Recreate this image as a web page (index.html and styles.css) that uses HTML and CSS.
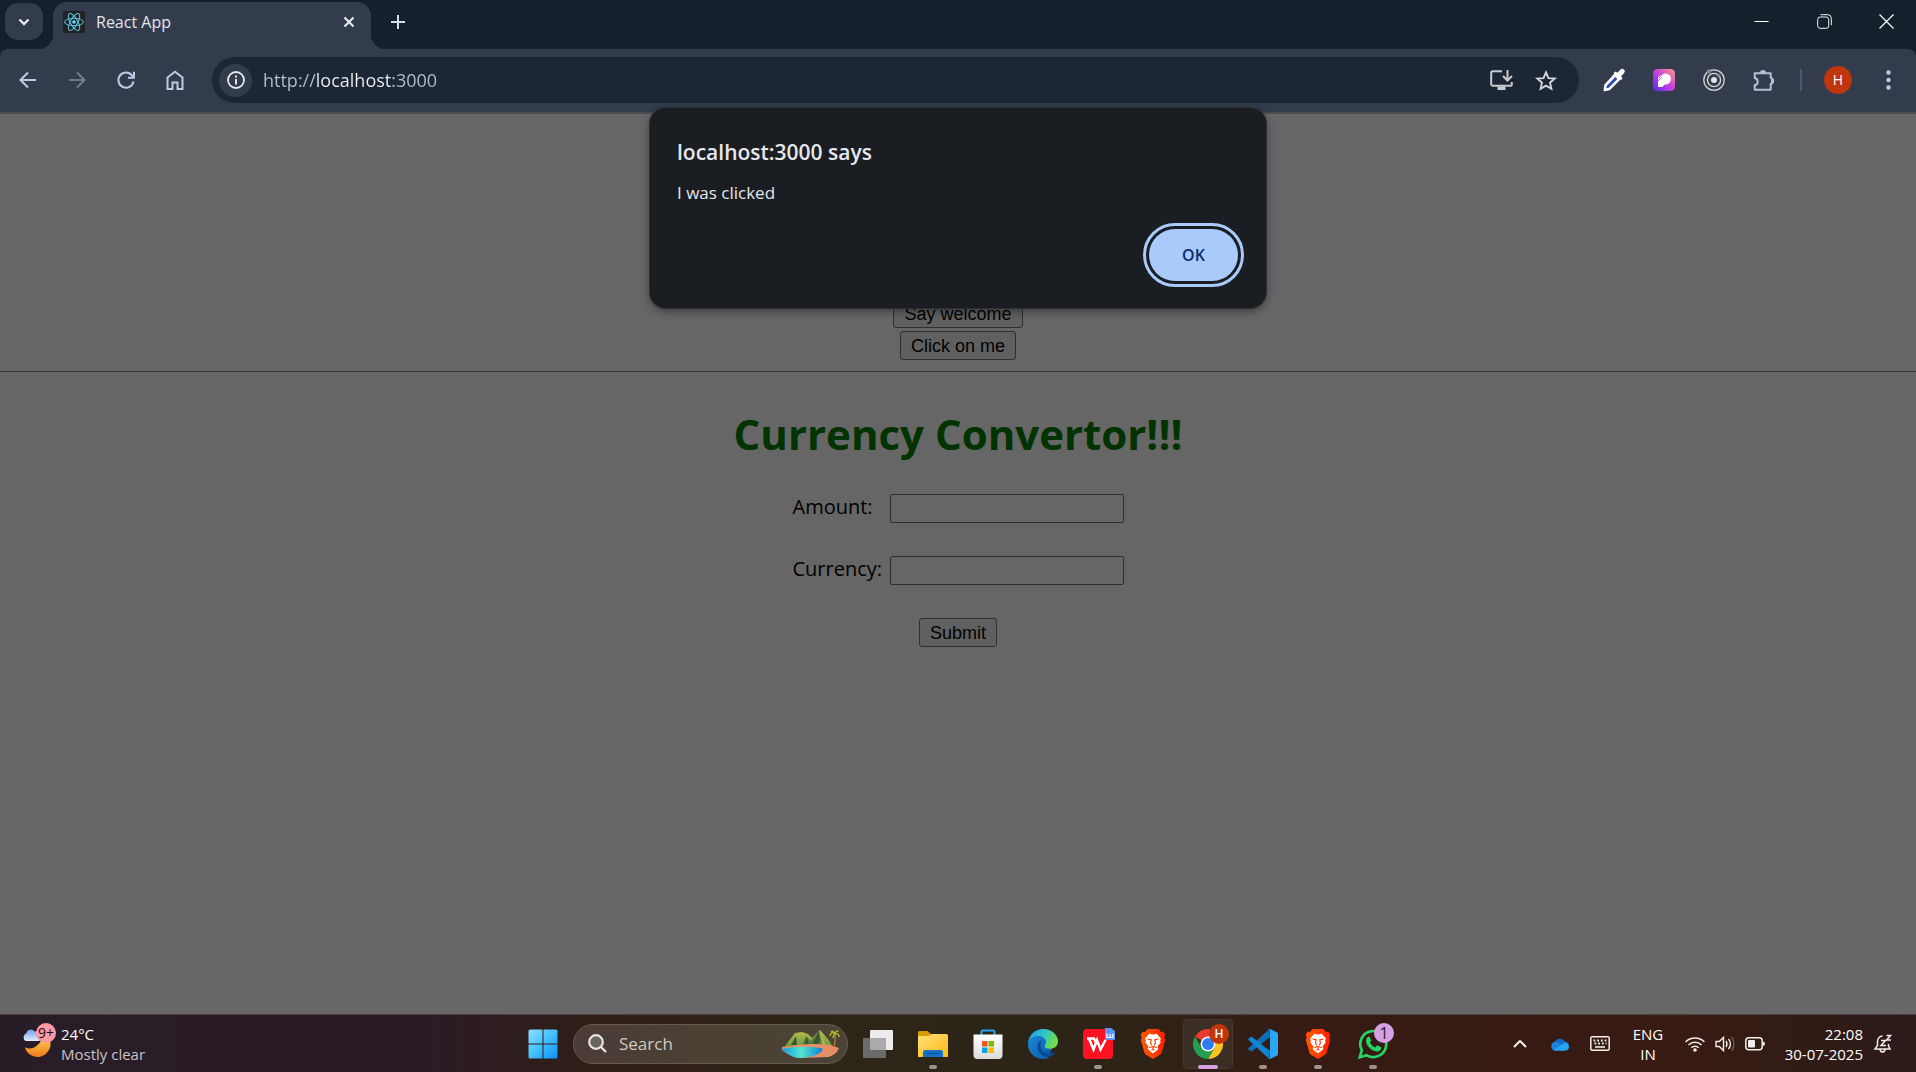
FILE: index.html
```html
<!DOCTYPE html>
<html lang="en">
<head>
<meta charset="utf-8">
<title>React App</title>
<link rel="stylesheet" href="styles.css">
</head>
<body>
<svg class="defs" aria-hidden="true">
  <defs>
    <linearGradient id="gBrave" x1="0" x2="1"><stop offset="0" stop-color="#ff5601"/><stop offset=".5" stop-color="#ff4000"/><stop offset="1" stop-color="#ff1f01"/></linearGradient>
    <linearGradient id="gMoon" x1="0" y1="0" x2="0" y2="1"><stop offset="0" stop-color="#ffc64a"/><stop offset="1" stop-color="#ec7a1c"/></linearGradient>
    <linearGradient id="gCloud" x1="0" y1="0" x2="0" y2="1"><stop offset="0" stop-color="#6f9df0"/><stop offset="1" stop-color="#e3eeff"/></linearGradient>
    <linearGradient id="gWin" x1="0" y1="0" x2="1" y2="1"><stop offset="0" stop-color="#8de0ff"/><stop offset=".5" stop-color="#42c0ff"/><stop offset="1" stop-color="#0e90f8"/></linearGradient>
    <linearGradient id="gFolder" x1="0" y1="0" x2="1" y2="1"><stop offset="0" stop-color="#ffe07a"/><stop offset="1" stop-color="#fdb913"/></linearGradient>
    <linearGradient id="gEdgeTop" x1="0" y1="0" x2="1" y2=".4"><stop offset="0" stop-color="#1f9be8"/><stop offset=".55" stop-color="#2fc3c8"/><stop offset="1" stop-color="#6fe04a"/></linearGradient>
    <linearGradient id="gEdgeLow" x1="0" y1="0" x2="1" y2="1"><stop offset="0" stop-color="#1b8fdf"/><stop offset="1" stop-color="#0d56a8"/></linearGradient>
    <linearGradient id="gPics" x1="0" y1="1" x2="1" y2="0"><stop offset="0" stop-color="#5a22f5"/><stop offset=".55" stop-color="#d045d8"/><stop offset="1" stop-color="#ff9a8a"/></linearGradient>
    <linearGradient id="gLake" x1="0" x2="1"><stop offset="0" stop-color="#0f97e6"/><stop offset=".5" stop-color="#55e6cf"/><stop offset="1" stop-color="#0a80d8"/></linearGradient>
    <linearGradient id="gHill" x1="0" y1="0" x2="0" y2="1"><stop offset="0" stop-color="#b9c14c"/><stop offset="1" stop-color="#5f8f3a"/></linearGradient>
    <linearGradient id="gBag" x1="0" y1="0" x2="0" y2="1"><stop offset="0" stop-color="#ffffff"/><stop offset="1" stop-color="#dcdcdc"/></linearGradient>
    <symbol id="brave" viewBox="0 0 30 30">
      <path fill="url(#gBrave)" d="M9.500 0h11l2.500 3 2.300-.2 2 3-1 2.700.9 2.700-3.600 12.300a4 4 0 0 1-1.600 2.200L15 30l-7-4.300a4 4 0 0 1-1.600-2.200L2.800 11.200l.9-2.700-1-2.700 2-3L7 3z"/>
      <path fill="#fff" d="M15 5.500l3.700-.7 4.200 4.600-.8 2 .6 1.900-3.300 4.500 1 2.300-1.700 1.500L15 24.600l-3.700-3-1.700-1.500 1-2.300-3.300-4.500.6-1.900-.8-2 4.200-4.600z"/>
      <path fill="none" stroke="#fb4303" stroke-width="1.200" d="M9.500 10l3.700.8-.6 3.200 1 2.200M20.500 10l-3.700.8.6 3.200-1 2.200M11.300 18.800l3.700-1.500 3.700 1.500M15 17.300v2.900M13.500 21l1.500-.8 1.500.8"/>
    </symbol>
  </defs>
</svg>

<header class="browser">
  <div class="tabstrip">
    <button class="tab-search" aria-label="Search tabs"><svg width="12" height="8" viewBox="0 0 12 8"><path d="M1.500 1.500L6 6l4.500-4.500" fill="none" stroke="#e6e9ee" stroke-width="2.400"/></svg></button>
    <div class="tab">
      <svg width="22" height="22" viewBox="0 0 22 22"><rect width="22" height="22" rx="2" fill="#222"/><g fill="none" stroke="#5bc8e4" stroke-width="1"><ellipse cx="11" cy="11" rx="9.500" ry="3.700"/><ellipse cx="11" cy="11" rx="9.500" ry="3.700" transform="rotate(60 11 11)"/><ellipse cx="11" cy="11" rx="9.500" ry="3.700" transform="rotate(120 11 11)"/></g><circle cx="11" cy="11" r="1.800" fill="#61dafb"/></svg>
      <span class="tab-title">React App</span>
      <button class="plain" aria-label="Close tab"><svg width="12" height="12" viewBox="0 0 12 12"><path d="M1.500 1.500l9 9m0-9l-9 9" stroke="#eceef2" stroke-width="2"/></svg></button>
    </div>
    <button class="plain new-tab" aria-label="New tab"><svg width="14" height="14" viewBox="0 0 14 14"><path d="M7 0v14M0 7h14" stroke="#d5dcea" stroke-width="2"/></svg></button>
    <div class="window-controls">
      <button class="plain" aria-label="Minimize"><svg width="15" height="15" viewBox="0 0 15 15"><path d="M.5 7.500h14" stroke="#fff" stroke-width="1"/></svg></button>
      <button class="plain" aria-label="Restore"><svg width="15" height="15" viewBox="0 0 15 15" fill="none" stroke="#f0f0f0"><rect x=".7" y="3" width="11" height="11.300" rx="2.500"/><path d="M3.500.7h7.300a3.500 3.500 0 0 1 3.500 3.500v7"/></svg></button>
      <button class="plain" aria-label="Close"><svg width="15" height="15" viewBox="0 0 15 15"><path d="M.5.5l14 14m0-14l-14 14" stroke="#fff" stroke-width="1.200"/></svg></button>
    </div>
  </div>

  <div class="toolbar">
    <nav class="nav">
      <button class="plain" aria-label="Back"><svg width="18" height="18" viewBox="0 0 18 18" fill="none" stroke="#bccbe3" stroke-width="2"><path d="M17 9H2.500M9 1.500L1.500 9 9 16.500"/></svg></button>
      <button class="plain" aria-label="Forward"><svg width="18" height="18" viewBox="0 0 18 18" fill="none" stroke="#6f7a8b" stroke-width="2"><path d="M1 9h14.500M9 1.500L16.500 9 9 16.500"/></svg></button>
      <button class="plain" aria-label="Reload"><svg width="18" height="18" viewBox="0 0 18 18" fill="none" stroke="#bccbe3" stroke-width="2"><path d="M16.500 10.500A7.600 7.600 0 1 1 15 4.400L16 6M17 .8v6h-6"/></svg></button>
      <button class="plain" aria-label="Home"><svg width="18" height="20" viewBox="0 0 18 20" fill="none" stroke="#bccbe3" stroke-width="2"><path d="M1.500 7.500L9 1.700l7.500 5.800V19h-5v-6.500h-5V19h-5z"/></svg></button>
    </nav>
    <form class="omnibox">
      <button type="button" class="site-info" aria-label="Site information"><svg width="18" height="18" viewBox="0 0 18 18"><circle cx="9" cy="9" r="8" fill="none" stroke="#e4e6ea" stroke-width="1.800"/><path d="M9 8v5.500M9 4.500v2" stroke="#e4e6ea" stroke-width="2"/></svg></button>
      <input class="url" type="text" aria-label="Address" value="http://localhost:3000">
      <button type="button" class="plain" aria-label="Install app"><svg width="23" height="20" viewBox="0 0 23 20" fill="none" stroke="#c9cace" stroke-width="2"><path d="M12 1.200H3A1.800 1.800 0 0 0 1.200 3v11A1.800 1.800 0 0 0 3 15.800h17.200A1.500 1.500 0 0 0 21.800 14v-2M17.500 0v9.500M13 6l4.500 4.500L22 6"/><path d="M7.500 16.500h8V20h-8z" fill="#c9cace" stroke="none"/></svg></button>
      <button type="button" class="plain" aria-label="Bookmark"><svg width="22" height="20" viewBox="0 0 22 20"><path d="M11 2.300l2.500 5.800 6.200.5-4.700 4.100 1.400 6.100L11 15.600l-5.400 3.200L7 12.700 2.300 8.600l6.200-.5z" fill="none" stroke="#d3d5d9" stroke-width="1.900"/></svg></button>
    </form>
    <div class="extensions">
      <button class="plain" aria-label="Color picker"><svg width="22" height="22" viewBox="0 0 22 22"><path d="M12 5l5 5L6.500 20.500 1.300 21.500 2 16z" fill="#fff" stroke="#fff" stroke-width="1.500" stroke-linejoin="round"/><path d="M12.300 8l2 2-8.500 8.700-2.500.6.500-2.500z" fill="#3048b8"/><path d="M10.500 4l2-1.500 2 1.200L17.500.6a2.400 2.400 0 0 1 3.600 3.400l-3 3.300 1.400 2-1.600 2z" fill="#fff"/></svg></button>
      <button class="plain" aria-label="Photo editor"><svg width="22" height="22" viewBox="0 0 22 22"><rect width="22" height="22" rx="4.500" fill="url(#gPics)"/><path d="M5 18V8l6-3.500h1.500a5.500 5.500 0 0 1 0 11L11 16l-1.500 2z" fill="#fff"/><path d="M5 7l3-3M5 9.500L10.500 4M5 12l4-4" stroke="#c65fe0" stroke-width="1"/></svg></button>
      <button class="plain" aria-label="Recorder"><svg width="22" height="22" viewBox="0 0 22 22" fill="none" stroke="#d4d4d4"><circle cx="11" cy="11" r="10.200" stroke-width="1.300"/><circle cx="11" cy="11" r="6.600" stroke-width="1.400"/><circle cx="11" cy="11" r="3" fill="#e2e2e2" stroke="none"/><circle cx="6" cy="2.500" r="2.200" fill="#888" stroke="none"/><circle cx="15.500" cy="6.500" r="1.800" fill="#888" stroke="none"/></svg></button>
      <button class="plain" aria-label="Extensions"><svg width="22" height="22" viewBox="0 0 22 22"><path d="M1.700 4.300h16v4.500a3.300 3.300 0 0 1 0 6.200v5.700h-16v-4.500q3-.5 3-3.500t-3-3.700z" fill="none" stroke="#b2c1db" stroke-width="2" stroke-linejoin="round"/><path d="M7 4a3 3 0 0 1 6 0zM18 9a3 3 0 0 1 0 6z" fill="#b2c1db"/></svg></button>
      <span class="divider"></span>
      <button class="avatar" aria-label="Profile">H</button>
      <button class="plain menu" aria-label="Menu"><svg width="5" height="20" viewBox="0 0 5 20" fill="#bfcce2"><circle cx="2.500" cy="2.500" r="2.200"/><circle cx="2.500" cy="10" r="2.200"/><circle cx="2.500" cy="17.500" r="2.200"/></svg></button>
    </div>
  </div>
</header>

<main class="page">
  <div class="actions">
    <button class="push">Say welcome</button>
    <button class="push">Click on me</button>
  </div>
  <form class="convertor">
    <h1>Currency Convertor!!!</h1>
    <div class="field"><label for="amount">Amount:</label><input id="amount" type="text"></div>
    <div class="field"><label for="currency">Currency:</label><input id="currency" type="text"></div>
    <button type="button" class="push">Submit</button>
  </form>
</main>

<dialog class="alert" open aria-labelledby="alert-title">
  <h2 id="alert-title">localhost:3000 says</h2>
  <p>I was clicked</p>
  <button class="ok">OK</button>
</dialog>

<footer class="taskbar">
  <button class="weather">
    <span class="weather-icon">
      <svg width="30" height="30" viewBox="0 0 30 30"><path d="M3 18.500q10 4 17-8l8 1a12.700 12.700 0 0 1-25 7z" fill="url(#gMoon)"/><path d="M4 12a4 4 0 0 1 .3-7.500 4.500 4.500 0 0 1 8.200-2A5 5 0 0 1 17 12z" fill="url(#gCloud)"/></svg>
      <span class="badge badge-weather">9+</span>
    </span>
    <span class="two-line"><span>24°C</span><span class="dim">Mostly clear</span></span>
  </button>

  <div class="apps">
    <button class="app" aria-label="Start"><svg width="30" height="30" viewBox="0 0 30 30"><path fill="url(#gWin)" d="M2 .500h12.500v14H.500V2A1.500 1.500 0 0 1 2 .500zM15.500.500H28A1.500 1.500 0 0 1 29.500 2v12.500h-14zM.500 15.500h14v14H2A1.500 1.500 0 0 1 .500 28zM15.500 15.500h14V28a1.500 1.500 0 0 1-1.500 1.500H15.500z"/></svg></button>
    <label class="search">
      <svg width="19" height="19" viewBox="0 0 19 19" fill="none" stroke="#e8e4e0"><circle cx="8" cy="8" r="6.800" stroke-width="2.200" fill="#6a6460"/><path d="M13 13l5 5" stroke-width="2.400"/></svg>
      <input type="text" placeholder="Search" aria-label="Search">
      <svg class="island" width="60" height="30" viewBox="0 0 60 30"><path d="M5 17L15 4l7-1 6 2 4 4 8-8 8 9 5 8-5 3H5z" fill="url(#gHill)"/><path d="M22 17l4-10 5 5 8-11 3 8 6 9z" fill="#5b7a3c"/><path d="M33 14l6-12 1 9-3 7zM24 16l3-8 2 9zM11 16l5-9 1 9z" fill="#39562f"/><path d="M39 2l5 10 3 5-5-2z" fill="#a9b658"/><path d="M2 18q28-5 48-2l9 3q-2 6-10 9l-30 1q-10-2-17-8z" fill="#e58f64"/><path d="M1 20q18-4 40-1 3 1 0 4-6 5-20 6-9 0-14-5z" fill="url(#gLake)"/><path d="M54 18q2-7 1-13" stroke="#b07a3a" stroke-width="1.400" fill="none"/><path d="M55 5q-4-3-5 2m5-2q-2-4-4-2m4 2q2-5 3-2m-3 2q4-1 4 3m-4-3q-2 2-2 4" stroke="#a8b52d" stroke-width="1.500" fill="none"/></svg>
    </label>
    <button class="app" aria-label="Task view"><svg width="30" height="30" viewBox="0 0 30 30"><rect y="9" width="23" height="20" rx="1" fill="#6b6b6b"/><rect x="7" y="1" width="23" height="20" rx="1" fill="#ececec"/><path d="M7 9h16v12H7z" fill="#aaa"/></svg></button>
    <button class="app running" aria-label="File Explorer"><svg width="30" height="30" viewBox="0 0 30 30"><path d="M0 3.500A1.500 1.500 0 0 1 1.500 2h8l3.500 3h15v8H0z" fill="#d99a07"/><path d="M0 8q0-1 1-1h10l3-2h14.500A1.500 1.500 0 0 1 30 6.500V28H0z" fill="url(#gFolder)"/><path d="M5 28v-5a2 2 0 0 1 2-2h16a2 2 0 0 1 2 2v5z" fill="#1273c9"/><path d="M8.500 24.500h13" stroke="#07519c" stroke-width="1.300"/></svg></button>
    <button class="app" aria-label="Store"><svg width="30" height="30" viewBox="0 0 30 30"><path d="M8.500 7V3a1.500 1.500 0 0 1 1.500-1.500h10A1.500 1.500 0 0 1 21.500 3v4" fill="none" stroke="#21a6ee" stroke-width="2"/><path d="M.5 5.500h29V26a4 4 0 0 1-4 4h-21a4 4 0 0 1-4-4z" fill="url(#gBag)"/><path d="M9 12h5.500v5.500H9z" fill="#f25022"/><path d="M15.500 12H21v5.500h-5.500z" fill="#7fba00"/><path d="M9 18.500h5.500V24H9z" fill="#00a4ef"/><path d="M15.500 18.500H21V24h-5.500z" fill="#ffb900"/></svg></button>
    <button class="app" aria-label="Edge"><svg width="30" height="30" viewBox="0 0 30 30"><path d="M0 15A15 15 0 0 1 20 1l4 18-4 10.200A15 15 0 0 1 0 15z" fill="url(#gEdgeLow)"/><path d="M.3 12.500C2 5 8 0 15 0c9 0 15 6 15 12.500 0 5-4 7.300-8 7.300-3.500 0-5.500-1.300-5.500-2.500 0-1 1.500-1.300 1.500-4C18 9.500 14.500 7 10.500 7 6 7 2 9 .3 12.500z" fill="url(#gEdgeTop)"/><path d="M13.500 11C10 13 8.500 17 10 21c1.800 5 7 8 13 6.300q2.200-1 4.300-3.300.5-1-.7-.6c-6 2.600-13 .5-14-5.400-.4-3 .4-5.300.9-7z" fill="#0a4a92"/></svg></button>
    <button class="app running" aria-label="WPS Office"><svg width="30" height="30" viewBox="0 0 30 30"><rect width="30" height="30" rx="4" fill="#fb1322"/><path d="M4 9.500h8M6 9.500l4.500 11 3.500-9.500 3.500 9.500L22.500 11M11 9.500l1.500 3.500" fill="none" stroke="#fff" stroke-width="2.500"/><path d="M22 -1h6l4 3v9H22z" fill="#5d93f5"/><path d="M24 4.500v4h6v-4M27 5v3.500" stroke="#fff" stroke-width="1.200" fill="none"/></svg></button>
    <button class="app" aria-label="Brave"><svg width="30" height="30"><use href="#brave"/></svg></button>
    <button class="app active" aria-label="Chrome"><svg width="30" height="30" viewBox="0 0 30 30"><path d="M15 15L2 7.500a15 15 0 0 1 26 0z" fill="#ea3a2d"/><path d="M15 7.500h13A15 15 0 0 1 15 30l6.500-11.300z" fill="#fcc31e"/><path d="M21.500 18.700L15 30A15 15 0 0 1 2 7.500l6.500 11.200z" fill="#23a04f"/><circle cx="15" cy="15" r="7.500" fill="#fff"/><circle cx="15" cy="15" r="5.900" fill="#2f7cf0"/></svg><span class="badge badge-profile">H</span></button>
    <button class="app running" aria-label="VS Code"><svg width="30" height="30" viewBox="0 0 30 30"><path d="M22 8L3.500 22.500.7 20.800a1.200 1.200 0 0 1 0-1.900L21 .3z" fill="#0a72bd"/><path d="M22 22L3.500 7.500.7 9.200a1.200 1.200 0 0 0 0 1.900L21 29.700z" fill="#0d86d3"/><path d="M22 0l6.800 3.200q1.200.6 1.200 2v19.600q0 1.400-1.200 2L22 30q-1 .2-1.800-.7Q22 29.500 22 27V3q0-2.500-1.800-2.300Q21-.2 22 0z" fill="#2ba6f2"/></svg></button>
    <button class="app running" aria-label="Brave profile"><svg width="30" height="30"><use href="#brave"/></svg></button>
    <button class="app running" aria-label="WhatsApp"><svg width="30" height="30" viewBox="0 0 30 30"><path d="M1.800 28.300l2-7.200a13 13 0 1 1 5 5.200z" fill="none" stroke="#25d366" stroke-width="2.700"/><path d="M9.500 8.200q.8-.9 2-.5l1.700 3.800-1.400 2q2 3.500 5.500 5l1.900-2.200 4 1.900q.2 4-4.300 4.300C13.500 22 7.500 16 8 11.500q.2-2 1.500-3.300z" fill="#25d366"/></svg><span class="badge badge-count">1</span></button>
  </div>

  <div class="tray">
    <button class="plain chevron" aria-label="Hidden icons"><svg width="14" height="9" viewBox="0 0 14 9"><path d="M1 8l6-6 6 6" fill="none" stroke="#f3eeec" stroke-width="2"/></svg></button>
    <button class="plain" aria-label="OneDrive"><svg width="20" height="14" viewBox="0 0 20 14"><path d="M4.500 13.500A4.500 4.500 0 0 1 4.500 5 6 6 0 0 1 15 4.500a4.700 4.700 0 0 1 1 9z" fill="#0f6cc8"/><path d="M4.500 13.500A4.500 4.500 0 0 1 4.500 5q2.500-.5 4.500 1l7 5-2 2.500z" fill="#1c80de"/><path d="M3.500 13.300L11 8l4-2.500a4.300 4.300 0 0 1 1.500 8.100H5z" fill="#28a4ee"/></svg></button>
    <button class="plain" aria-label="Touch keyboard"><svg width="20" height="15" viewBox="0 0 20 15" fill="none" stroke="#f3eeec"><rect x=".8" y=".8" width="18.400" height="13.400" rx="1.500" stroke-width="1.500"/><path d="M3.500 4.500h13M4.500 7.500h12" stroke-width="1.800" stroke-dasharray="1.800 1.900"/><path d="M5 11h10" stroke-width="1.600"/></svg></button>
    <button class="two-line language"><span>ENG</span><span>IN</span></button>
    <button class="status" aria-label="Network, volume and battery">
      <svg width="20" height="16" viewBox="0 0 20 16" fill="none" stroke="#f3eeec" stroke-width="1.500"><path d="M.6 6a13.300 13.300 0 0 1 18.800 0M3.500 9a9.200 9.200 0 0 1 13 0M6.300 11.800a5.200 5.200 0 0 1 7.400 0"/><circle cx="10" cy="14" r="1.800" fill="#f3eeec" stroke="none"/></svg>
      <svg width="20" height="16" viewBox="0 0 20 16" fill="none" stroke="#f3eeec" stroke-width="1.400"><path d="M1 5.500h3.300L8.500 1.500v13l-4.200-4H1zM11 5q2 3 0 6M13.500 2.800q3.800 5.200 0 10.400"/><path d="M16.500 1q5 7 0 14" stroke="#6d5550"/></svg>
      <svg width="20" height="14" viewBox="0 0 20 14"><rect x=".8" y=".8" width="16.400" height="12" rx="3" fill="none" stroke="#f3eeec" stroke-width="1.500"/><rect x="3" y="3" width="7" height="7.600" rx="1" fill="#f3eeec"/><path d="M18 4.500q2 .3 2 2.300t-2 2.300z" fill="#f3eeec"/></svg>
    </button>
    <button class="two-line clock"><span>22:08</span><span>30-07-2025</span></button>
    <button class="plain" aria-label="Notifications"><svg width="18" height="19" viewBox="0 0 18 19" fill="none" stroke="#f3eeec" stroke-width="1.500"><path d="M8.500 2A5.500 5.500 0 0 0 3.500 7.500v4L1 15h15l-1.500-3V10M6 15.500q.5 2.500 2.500 2.500t2.500-2.500M7 6.500h4.500L7 11.500h5M12.500 1.500h4L12.500 6h4.500"/></svg></button>
  </div>
</footer>
</body>
</html>
```

FILE: styles.css
```css
* { box-sizing: border-box; }

body {
  margin: 0;
  min-height: 100vh;
  display: flex;
  flex-direction: column;
  position: relative;
  background: #666;
  font-family: "Open Sans", "Noto Sans", sans-serif;
  font-size: 14px;
}

button, input { font: inherit; }
button { padding: 0; border: 0; background: none; color: inherit; }
svg { display: block; flex: none; overflow: visible; }
.defs { position: absolute; width: 0; height: 0; }
.plain { display: flex; align-items: center; justify-content: center; }

/* Browser frame */
.browser { background: #15202d; }

.tabstrip {
  display: flex;
  align-items: stretch;
  height: 49px;
  padding-left: 5px;
}
.tab-search {
  width: 38px;
  height: 37px;
  margin: 3px 10px 0 0;
  border-radius: 13px;
  background: #323c4d;
  display: flex;
  align-items: center;
  justify-content: center;
}
.tab {
  position: relative;
  display: flex;
  align-items: center;
  width: 318px;
  margin-top: 2px;
  padding: 0 16px 8px 10px;
  border-radius: 14px 14px 0 0;
  background: #323c4d;
}
.tab::before, .tab::after {
  content: "";
  position: absolute;
  bottom: 0;
  width: 14px;
  height: 14px;
}
.tab::before { right: 100%; background: radial-gradient(circle at 0 0, transparent 14px, #323c4d 14px); }
.tab::after { left: 100%; background: radial-gradient(circle at 100% 0, transparent 14px, #323c4d 14px); }
.tab-title { flex: 1; margin-left: 11px; color: #e3e6eb; font-size: 16px; line-height: 22px; }
.new-tab { width: 54px; padding-bottom: 5px; }

.window-controls { display: flex; margin-left: auto; }
.window-controls .plain { width: 63px; padding-bottom: 7px; }
.window-controls .plain:last-child { width: 60px; }

.toolbar {
  display: flex;
  align-items: center;
  height: 65px;
  padding-bottom: 1px;
  border-radius: 8px 8px 0 0;
  border-bottom: 2px solid #4a4d52;
  background: #323c4d;
}
.nav { display: flex; padding-left: 3px; }
.nav .plain { width: 49px; height: 40px; }

.omnibox {
  flex: 1;
  display: flex;
  align-items: center;
  gap: 22px;
  height: 46px;
  margin-left: 13px;
  padding: 0 22px 0 7px;
  border-radius: 23px;
  background: #1c2736;
}
.site-info {
  width: 33px;
  height: 33px;
  border-radius: 50%;
  background: #323c4d;
  display: flex;
  align-items: center;
  justify-content: center;
}
.url {
  flex: 1;
  min-width: 0;
  margin-left: -11px;
  padding: 0;
  border: 0;
  outline: 0;
  color: #c3c7cf;
  font-size: 18px;
  line-height: 26px;
  background: linear-gradient(90deg, #b9bec7 54px, #f1f2f4 54px, #f1f2f4 130px, #b9bec7 130px);
  background-clip: text;
  -webkit-background-clip: text;
  -webkit-text-fill-color: transparent;
}

.extensions { display: flex; align-items: center; }
.extensions .plain { width: 50px; height: 40px; }
.extensions .plain:first-child { margin-left: 10px; }
.divider { width: 2px; height: 22px; margin: 0 22px 0 11px; background: #4e596b; }
.avatar {
  width: 28px;
  height: 28px;
  border-radius: 50%;
  background: #bf360c;
  color: #fff;
  font-size: 14px;
  line-height: 28px;
}
.extensions .menu { width: 64px; padding-left: 8px; }

/* Web page */
.page {
  flex: 1;
  color: #000;
  text-align: center;
  font-size: 20px;
}
.actions {
  display: flex;
  flex-direction: column;
  align-items: center;
  gap: 3px;
  padding: 185px 0 11px;
  border-bottom: 1px solid #333;
}
.push {
  height: 29px;
  padding: 0 10px;
  border: 1px solid #2f2f2f;
  border-radius: 3px;
  background: #606060;
  font-family: "Liberation Sans", Arial, sans-serif;
  font-size: 18px;
  line-height: 26px;
}
.convertor {
  display: flex;
  flex-direction: column;
  align-items: center;
  padding-top: 32px;
}
h1 {
  margin: 0 0 30px;
  color: #030;
  font-size: 42px;
  line-height: 60px;
}
.field {
  display: flex;
  align-items: center;
  justify-content: space-between;
  width: 331px;
  height: 29px;
  margin-bottom: 33px;
}
.field label { padding-bottom: 4px; }
.field input {
  width: 234px;
  height: 29px;
  border: 1px solid #2f2f2f;
  border-radius: 2px;
  background: #666;
}

/* Alert */
.alert {
  position: absolute;
  top: 108px;
  left: 0;
  right: 0;
  width: 616px;
  height: 200px;
  margin: 0 auto;
  padding: 28px 28px 27px 27px;
  border: 0;
  border-radius: 16px;
  background: #1a1d21;
  color: #e6e7ea;
  box-shadow: 0 0 0 1px #2b2f34, 0 3px 8px rgba(0, 0, 0, .45);
  display: flex;
  flex-direction: column;
}
.alert h2 { margin: 0; font-size: 21px; font-weight: 600; line-height: 32px; }
.alert p { margin: 13px 0 0; font-size: 17px; line-height: 24px; }
.ok {
  align-self: flex-end;
  width: 89px;
  height: 52px;
  margin-top: auto;
  border-radius: 26px;
  outline: 3px solid #a8cbfc;
  outline-offset: 3px;
  background: #a8cbfc;
  color: #062e6f;
  font-size: 16px;
  font-weight: 600;
}

/* Taskbar */
.taskbar {
  display: grid;
  grid-template-columns: 1fr auto 1fr;
  align-items: center;
  height: 58px;
  border-top: 1px solid #48403e;
  background: linear-gradient(90deg, #281d26, #2a1b26 22%, #301e16 31%, #2c2518 44%, #2d2417 58%, #351b14 67%, #381b13 88%, #2b1b19);
  color: #fff;
}
.two-line { display: flex; flex-direction: column; font-size: 15px; line-height: 20px; }
.weather { display: flex; align-items: center; gap: 9px; padding-left: 22px; text-align: left; justify-self: start; }
.weather-icon { position: relative; }
.dim { color: #c8c3c7; }

.badge { position: absolute; border-radius: 50%; text-align: center; }
.badge-weather { top: -6px; left: 14px; width: 20px; height: 20px; background: #ff99a4; color: #111; font-size: 14px; line-height: 20px; }
.badge-profile { top: 5px; left: 26px; width: 20px; height: 20px; background: #bf360c; color: #fff; font-size: 12px; font-weight: 600; line-height: 20px; }
.badge-count { top: 4px; left: 26px; width: 20px; height: 20px; background: #d8a0e4; color: #222; font-size: 16px; line-height: 20px; }

.apps { display: flex; align-items: center; gap: 5px; }
.app {
  position: relative;
  width: 50px;
  height: 50px;
  border-radius: 5px;
  display: flex;
  align-items: center;
  justify-content: center;
}
.running::after, .active::after {
  content: "";
  position: absolute;
  bottom: 0;
  left: 21px;
  width: 8px;
  height: 4px;
  border-radius: 2px;
  background: #9b938d;
}
.active { background: #3b2e25; box-shadow: inset 0 0 0 1px #44382f; }
.active::after { left: 15px; width: 20px; background: #d8a0e4; }

.search {
  display: flex;
  align-items: center;
  gap: 12px;
  width: 275px;
  height: 40px;
  padding: 0 7px 0 14px;
  border: 1px solid #665c50;
  border-radius: 20px;
  background: linear-gradient(90deg, #4b3b37, #4b4135 45%, #4b4436);
}
.search input {
  flex: 1;
  min-width: 0;
  padding: 0;
  border: 0;
  outline: 0;
  background: none;
  font-size: 17px;
}
.search input::placeholder { color: #cfcac4; opacity: 1; }

.tray { display: flex; align-items: center; justify-self: end; padding-right: 24px; }
.chevron { margin-right: 23px; }
.tray .plain + .plain { margin-right: 20px; }
.language { width: 36px; align-items: center; margin-right: 19px; }
.status { display: flex; align-items: center; gap: 10px; }
.clock { width: 98px; align-items: flex-end; margin-right: 11px; }
```
